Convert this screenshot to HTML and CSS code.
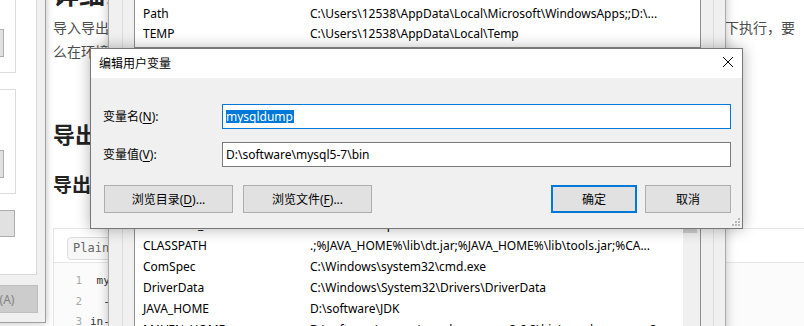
FILE: index.html
```html
<!DOCTYPE html>
<html>
<head>
  <meta charset="utf-8">
  <title>编辑用户变量</title>
  <link rel="stylesheet" href="styles.css">
</head>
<body>
  <div class="article">
    <h1>详细说明</h1>
    <p>导入导出数据库需要用到数据库自带的导出命令，这个命令必须要在数据库软件安装目录里面的二进制文件夹下执行，要么在环境变量中配置好路径。</p>
    <h2>导出数据</h2>
    <h3>导出整个数据库</h3>
    <div class="code-block">
      <div class="code-toolbar"><span class="lang-btn">Plain Text</span></div>
      <div class="code-body">
        <div class="code-line"><span class="ln">1</span><span class="src"> mysqldump -u root -p dbname &gt; dbname.sql</span></div>
        <div class="code-line"><span class="ln">2</span><span class="src">  --default-character-set=utf8</span></div>
        <div class="code-line"><span class="ln">3</span><span class="src">in-place</span></div>
      </div>
    </div>
  </div>

  <div class="win sysprops">
    <div class="tab-page">
      <div class="group g1"><button class="btn">设置(S)...</button></div>
      <div class="group g2"><button class="btn">设置(E)...</button></div>
      <button class="btn lone">环境变量(N)...</button>
    </div>
    <div class="dlg-buttons">
      <button class="btn">确定</button>
      <button class="btn">取消</button>
      <button class="btn" disabled>应用(A)</button>
    </div>
  </div>

  <div class="win envvars">
    <div class="group">
      <div class="list list-user">
        <div class="row"><span>OneDrive</span><span>C:\Users\12538\OneDrive</span></div>
        <div class="row"><span>Path</span><span>C:\Users\12538\AppData\Local\Microsoft\WindowsApps;;D:\...</span></div>
        <div class="row"><span>TEMP</span><span>C:\Users\12538\AppData\Local\Temp</span></div>
      </div>
      <div class="list-buttons">
        <button class="btn">新建(N)...</button>
        <button class="btn">编辑(E)...</button>
        <button class="btn">删除(D)</button>
      </div>
    </div>
    <div class="group sys-group">
      <div class="group-title">系统变量(S)</div>
      <div class="list list-sys">
        <div class="rows">
          <div class="row"><span>CATALINA_HOME</span><span>D:\software\apache-tomcat-9.0.41</span></div>
          <div class="row"><span>CLASSPATH</span><span>.;%JAVA_HOME%\lib\dt.jar;%JAVA_HOME%\lib\tools.jar;%CA...</span></div>
          <div class="row"><span>ComSpec</span><span>C:\Windows\system32\cmd.exe</span></div>
          <div class="row"><span>DriverData</span><span>C:\Windows\System32\Drivers\DriverData</span></div>
          <div class="row"><span>JAVA_HOME</span><span>D:\software\JDK</span></div>
          <div class="row"><span>MAVEN_HOME</span><span>D:\software\maven\apache-maven-3.6.3\bin\apache-maven-3...</span></div>
        </div>
        <div class="scrollbar"><div class="thumb"></div></div>
      </div>
    </div>
  </div>

  <div class="win edit-dlg">
    <div class="title-bar">
      <span class="title">编辑用户变量</span>
      <svg class="close" width="10" height="10" viewBox="0 0 10 10"><path d="M0 0L10 10M10 0L0 10" stroke="#000" stroke-width="1"/></svg>
    </div>
    <div class="dlg-body">
      <label class="field-label">变量名(<u>N</u>):</label>
      <div class="field focused"><span class="sel">mysqldump</span></div>
      <label class="field-label">变量值(<u>V</u>):</label>
      <div class="field">D:\software\mysql5-7\bin</div>
      <div class="dlg-actions">
        <div class="action-group browse">
          <button class="btn wide">浏览目录(<u>D</u>)...</button>
          <button class="btn wide">浏览文件(<u>F</u>)...</button>
        </div>
        <div class="action-group">
          <button class="btn default">确定</button>
          <button class="btn">取消</button>
        </div>
      </div>
    </div>
    <svg class="grip" width="8" height="8" viewBox="0 0 8 8">
      <rect x="6" y="0" width="2" height="2" fill="#b8b8b8"/>
      <rect x="3" y="3" width="2" height="2" fill="#b8b8b8"/>
      <rect x="6" y="3" width="2" height="2" fill="#b8b8b8"/>
      <rect x="0" y="6" width="2" height="2" fill="#b8b8b8"/>
      <rect x="3" y="6" width="2" height="2" fill="#b8b8b8"/>
      <rect x="6" y="6" width="2" height="2" fill="#b8b8b8"/>
    </svg>
  </div>
</body>
</html>
```

FILE: styles.css
```css
body { margin: 0; width: 804px; height: 326px; overflow: hidden; position: relative; background: #fff; font-family: "Noto Sans CJK SC", sans-serif; }

/* blog page behind the windows */
.article { padding-left: 53px; width: 751px; color: #4d4d4d; }
.article h1 { margin: -24px 0 5px; font-size: 26px; line-height: 34px; color: #222; }
.article p { margin: 0; width: 750px; font-size: 14px; line-height: 24px; }
.article h2 { margin: 54px 0 0; font-size: 22px; line-height: 32px; color: #222; }
.article h3 { margin: 21px 0 0; font-size: 19px; line-height: 28px; color: #222; }

.code-block { margin: 30px -40px 0 0; border: 1px solid #e6e6e6; }
.code-toolbar { height: 34px; box-sizing: border-box; padding: 4px 0 0 13px; border-bottom: 1px solid #e6e6e6; }
.lang-btn { display: inline-block; height: 23px; box-sizing: border-box; padding: 0 5px; line-height: 21px; border: 1px solid #dcdcdc; border-radius: 4px; background: #f7f7f7; color: #666; font-family: "DejaVu Sans Mono", monospace; font-size: 12px; }
.code-body { padding-top: 8px; background: #fbfbfb; font-family: "DejaVu Sans Mono", monospace; font-size: 11px; line-height: 20.5px; }
.code-line { display: flex; }
.ln { width: 36px; box-sizing: border-box; padding-right: 8px; text-align: right; color: #aaa; }
.src { white-space: pre; color: #333; }

/* windows */
.win { position: absolute; box-sizing: border-box; font-family: "Noto Sans", "Noto Sans CJK SC", sans-serif; font-size: 12px; color: #000; }
.btn { width: 86px; height: 28px; box-sizing: border-box; padding: 0; border: 1px solid #adadad; background: #e1e1e1; font: inherit; color: #000; white-space: nowrap; }
.btn:disabled { background: #cccccc; border-color: #bfbfbf; color: #838383; }
.btn.wide { width: 129px; }
.btn.default { border: 2px solid #0078d7; }

.sysprops { left: -414px; top: -10px; width: 460px; padding: 0 8px 9px 0; background: #f0f0f0; border: 1px solid #a0a0a0; box-shadow: 0 0 7px rgba(0,0,0,0.28); }
.tab-page { height: 284px; box-sizing: border-box; display: flex; flex-direction: column; padding-right: 20px; background: #fff; border: 1px solid #d9d9d9; }
.group { border: 1px solid #dcdcdc; box-sizing: border-box; }
.sysprops .group { display: flex; justify-content: flex-end; align-items: flex-start; padding-right: 11px; }
.g1 { height: 81px; padding-top: 36px; }
.g2 { height: 105px; margin-top: 16px; padding-top: 60px; }
.lone { width: 116px; height: 27px; align-self: flex-end; margin: 16px 1px 0 0; }
.dlg-buttons { display: flex; justify-content: flex-end; gap: 8px; margin: 10px -1px 0 0; }

.envvars { left: 108px; top: -19px; width: 618px; padding: 0 11px 0 13px; background: #f0f0f0; border: 1px solid #aaa; box-shadow: 0 0 10px rgba(0,0,0,0.25); }
.envvars .group { padding: 0 12px 0 11px; }
.list { background: #fff; border: 1px solid #8e8e8e; }
.list-user { padding-bottom: 3px; }
.row { display: grid; grid-template-columns: 167px 1fr; height: 20px; padding-left: 8px; line-height: 20px; white-space: nowrap; overflow: hidden; }
.list-buttons { display: flex; justify-content: flex-end; gap: 8px; margin: 44px 0; }
.sys-group { margin-top: 14px; }
.group-title { height: 33px; padding-left: 8px; line-height: 24px; }
.list-sys { display: flex; height: 130px; }
.list-sys .rows { flex: 1; overflow: hidden; }
.list-sys .row { height: 21px; line-height: 21px; }
.scrollbar { width: 17px; background: #f0f0f0; }
.thumb { height: 19px; margin: 0 3px 0 0; background: #cdcdcd; }

.edit-dlg { left: 90px; top: 48px; width: 653px; height: 181px; background: #f0f0f0; border: 1px solid #777; box-shadow: 0 0 14px rgba(0,0,0,0.3); }
.title-bar { display: flex; align-items: center; justify-content: space-between; height: 29px; padding: 0 9px 0 8px; background: #fff; }
.title { line-height: 29px; }
.close { margin-bottom: 3px; }
.dlg-body { display: grid; grid-template-columns: 119px 1fr; row-gap: 13px; padding: 26px 11px 0 12px; }
.field-label { line-height: 25px; }
.field-label u, .btn u { text-decoration-thickness: 1px; text-underline-offset: 2px; }
.field { display: flex; align-items: center; height: 25px; box-sizing: border-box; padding: 0 3px; background: #fff; border: 1px solid #7a7a7a; line-height: 23px; white-space: nowrap; }
.field.focused { border-color: #0078d7; }
.sel { height: 13px; line-height: 13px; padding-right: 1px; background: #0078d7; color: #fff; }
.dlg-actions { grid-column: 1 / -1; display: flex; justify-content: space-between; margin: 5px 0 0 1px; }
.action-group { display: flex; gap: 8px; }
.action-group.browse { gap: 10px; }
.grip { position: absolute; right: 2px; bottom: 2px; }
```
